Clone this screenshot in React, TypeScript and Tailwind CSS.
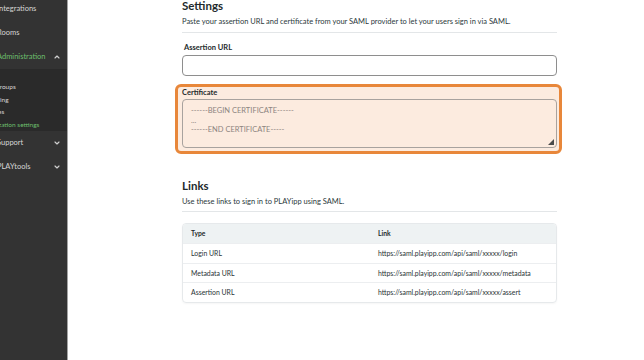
import { ChevronDown, ChevronUp } from "lucide-react";

const font = { fontFamily: "Lato, 'Open Sans', sans-serif" };

function NavRow({
  label,
  active,
  open,
}: {
  label: string;
  active?: boolean;
  open?: boolean;
}) {
  return (
    <div className="flex items-center justify-between h-[24px] pr-[6px]">
      <span
        className={`-ml-[3px] text-[7.5px] whitespace-nowrap ${active ? "text-[#6cbf6c]" : "text-[#d6d6d6]"}`}
      >
        {label}
      </span>
      {open === undefined ? null : open ? (
        <ChevronUp size={8} strokeWidth={3.5} className="text-[#d0d0d0]" />
      ) : (
        <ChevronDown size={8} strokeWidth={3.5} className="text-[#d0d0d0]" />
      )}
    </div>
  );
}

function SubRow({ label, offset, active }: { label: string; offset: string; active?: boolean }) {
  return (
    <div className="h-[12.5px] flex items-center overflow-hidden">
      <span
        className={`${offset} text-[6.5px] whitespace-nowrap ${active ? "text-[#6cbf6c]" : "text-[#d6d6d6]"}`}
      >
        {label}
      </span>
    </div>
  );
}

const links = [
  ["Login URL", "https://saml.playipp.com/api/saml/xxxxx/login"],
  ["Metadata URL", "https://saml.playipp.com/api/saml/xxxxx/metadata"],
  ["Assertion URL", "https://saml.playipp.com/api/saml/xxxxx/assert"],
];

export default function App() {
  return (
    <div className="flex w-[644px] h-[360px] overflow-hidden bg-white" style={font}>
      <aside className="w-[68px] shrink-0 bg-[#333333] border-r border-[#a3a3a3] overflow-hidden">
        <div className="-mt-[3px]">
          <NavRow label="Integrations" />
          <NavRow label="Rooms" />
          <NavRow label="Administration" active open />
          <div className="bg-[#2a2a2a] pt-[12px]">
            <SubRow label="Groups" offset="-ml-[5px]" />
            <SubRow label="Branding" offset="-ml-[17px]" />
            <SubRow label="Roles" offset="-ml-[11px]" />
            <SubRow label="Organization settings" offset="-ml-[21px]" active />
          </div>
          <NavRow label="Support" open={false} />
          <NavRow label="PLAYtools" open={false} />
        </div>
      </aside>

      <main className="flex-1 pl-[114px]">
        <div className="w-[375px] text-[#1e2a2c]">
          <h2 className="-mt-[1px] h-[14px] leading-[14px] text-[11.5px] font-bold">Settings</h2>
          <p className="mt-[3px] h-[12px] leading-[12px] text-[7.5px] text-[#2c3a3c]">
            Paste your assertion URL and certificate from your SAML provider to let your users sign in via SAML.
          </p>
          <div className="mt-[4px] border-t border-[#e3e6e8]" />

          <label className="block mt-[10px] h-[10px] leading-[10px] text-[7.5px] font-bold pl-[2px]">
            Assertion URL
          </label>
          <input className="block mt-[2px] w-full h-[21px] rounded-[4px] border border-[#8e8e8e] bg-white" />

          <div className="mt-[8px] -ml-[7px] -mr-[5px] h-[70px] rounded-[6px] border-[3px] border-[#e8873a] bg-[#fcebdf] pl-[4px] pr-[2px] pt-[1px]">
            <label className="block h-[10px] leading-[10px] text-[7.5px] font-bold">Certificate</label>
            <div className="relative mt-[1px]">
              <textarea
                className="block w-full h-[49px] rounded-[4px] border border-[#a8a29e] bg-transparent pl-[8px] pt-[6px] text-[7.5px] leading-[9.5px] placeholder:text-[#8c8480] resize-none"
                placeholder={"------BEGIN CERTIFICATE------\n...\n------END CERTIFICATE-----"}
              />
              <svg width="6" height="6" viewBox="0 0 6 6" className="absolute right-[3px] bottom-[3px]">
                <path d="M6 0 L6 6 L0 6 Z" fill="#4a4a4a" />
              </svg>
            </div>
          </div>

          <h2 className="mt-[25px] h-[14px] leading-[14px] text-[11.5px] font-bold">Links</h2>
          <p className="mt-[3px] h-[12px] leading-[12px] text-[7.5px] text-[#2c3a3c]">
            Use these links to sign in to PLAYipp using SAML.
          </p>
          <div className="mt-[3px] border-t border-[#e3e6e8]" />

          <div className="mt-[11px] rounded-[4px] border border-[#e6e9eb] overflow-hidden shadow-[0_1px_2px_rgba(0,0,0,0.04)]">
            <div className="flex items-center h-[19px] bg-[#eef2f3] text-[6.75px] font-bold">
              <div className="w-[195px] pl-[8px]">Type</div>
              <div>Link</div>
            </div>
            {links.map(([type, link]) => (
              <div
                key={type}
                className="flex items-center h-[19.5px] border-t border-[#eceef0] text-[6.9px] text-[#2a3436]"
              >
                <div className="w-[195px] pl-[8px]">{type}</div>
                <div>{link}</div>
              </div>
            ))}
          </div>
        </div>
      </main>
    </div>
  );
}
